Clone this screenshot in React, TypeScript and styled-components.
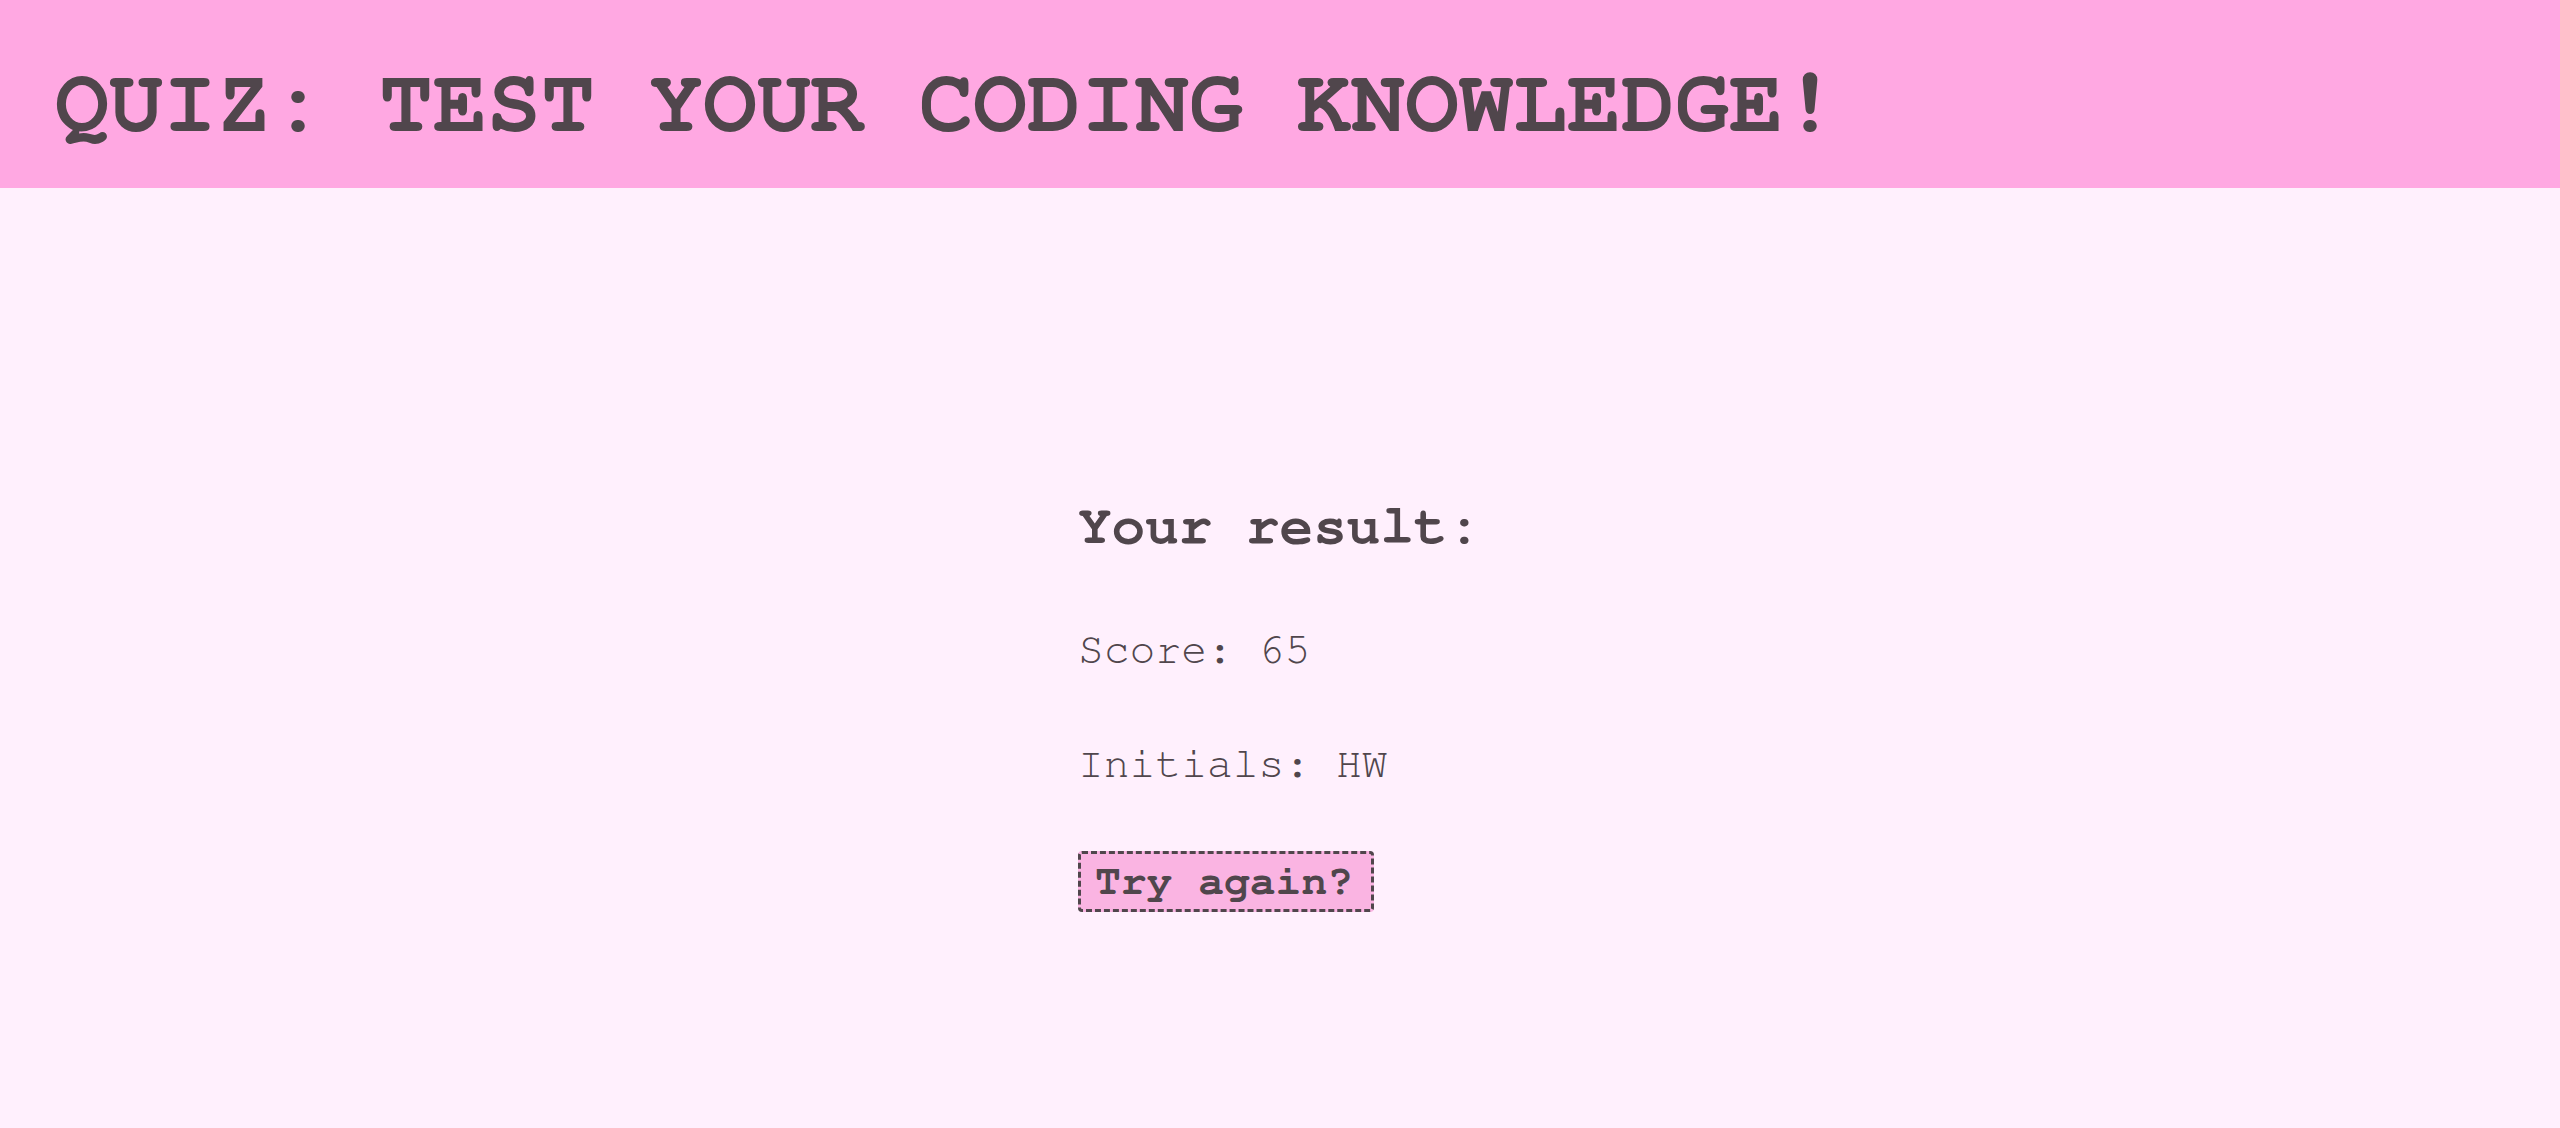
import React from "react";
import styled, { createGlobalStyle } from "styled-components";

const Global = createGlobalStyle`
  html, body { margin: 0; padding: 0; }
  body {
    background: #fff0fd;
    color: #50464c;
    font-family: FreeMono, "Courier New", Courier, monospace;
    min-height: 1128px;
  }
`;

const Page = styled.div`
  display: flex;
  flex-direction: column;
  min-height: 1128px;
`;

const Header = styled.header`
  height: 188px;
  background: #ffa8e2;
  padding: 59px 0 0 55px;
  box-sizing: border-box;
`;

const Title = styled.h1`
  margin: 0;
  font-size: 90px;
  line-height: 1;
  font-weight: bold;
  text-transform: uppercase;
`;

const Main = styled.main`
  display: flex;
  justify-content: center;
  padding-top: 310px;
`;

const Result = styled.section`
  width: 404px;
  display: flex;
  flex-direction: column;
  align-items: flex-start;
`;

const Heading = styled.h2`
  margin: 0 0 75px;
  font-size: 56px;
  line-height: 1;
  font-weight: bold;
`;

const Line = styled.p<{ $gap: number }>`
  margin: 0 0 ${(p) => p.$gap}px;
  font-size: 43px;
  line-height: 1;
`;

const Button = styled.button`
  font-family: inherit;
  font-size: 43px;
  line-height: 1;
  font-weight: bold;
  color: #50464c;
  background: #fab4e2;
  border: 3px dashed #50464c;
  border-radius: 4px;
  width: 296px;
  height: 61px;
  padding: 0 14px;
  text-align: left;
  cursor: pointer;
`;

export default function App() {
  return (
    <Page>
      <Global />
      <Header>
        <Title>Quiz: Test your coding knowledge!</Title>
      </Header>
      <Main>
        <Result>
          <Heading>Your result:</Heading>
          <Line $gap={71}>Score: 65</Line>
          <Line $gap={65}>Initials: HW</Line>
          <Button>Try again?</Button>
        </Result>
      </Main>
    </Page>
  );
}
